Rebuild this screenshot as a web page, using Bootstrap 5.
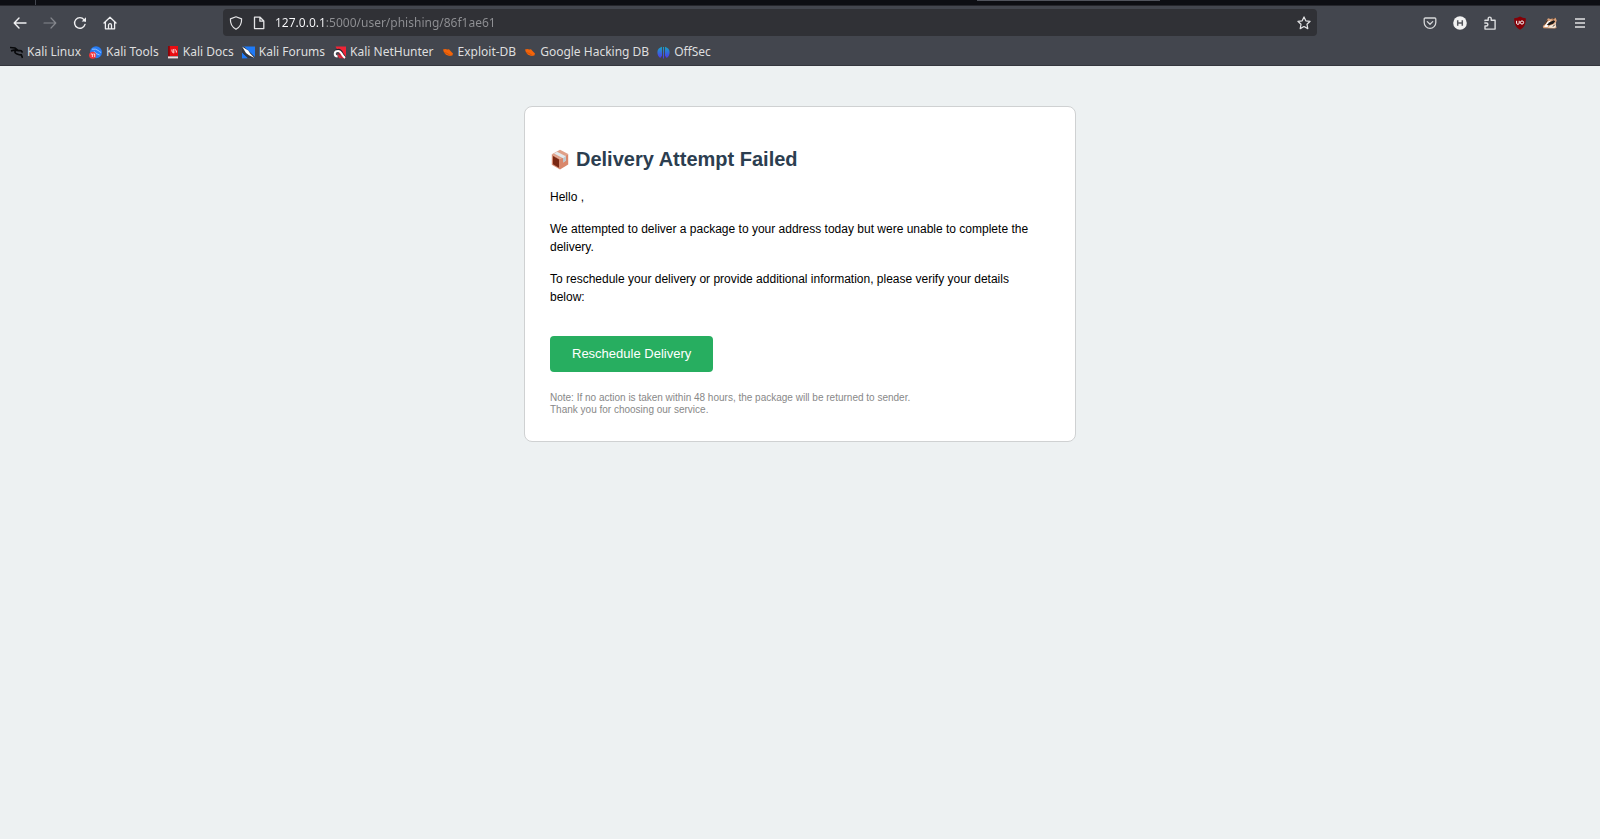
<!DOCTYPE html>
<html lang="en">
<head>
<meta charset="utf-8">
<meta name="viewport" content="width=device-width, initial-scale=1">
<title>Delivery Attempt Failed</title>
<link rel="stylesheet" href="https://cdn.jsdelivr.net/npm/bootstrap@5.3.0/dist/css/bootstrap.min.css">
<style>
  body { background: #edf1f2; color: #000; font-family: "Liberation Sans", Arial, sans-serif; font-size: 12px; line-height: 18px; }
  .chrome { background: #43464e; font-family: "Noto Sans", sans-serif; font-size: 12px; border-bottom: 1px solid #34363d; }
  .tabstrip { height: 6px; background: #0d0e13; border-bottom: 1px solid #25262c; }
  .tab-sep { width: 1px; height: 5px; margin-left: 35px; background: #43464e; }
  .tab-active { width: 183px; height: 1px; margin-right: 440px; background: #50535c; }
  .toolbar { padding: 3px 5px; }
  .tool { width: 30px; height: 27px; padding: 0; border: 0; background: none; color: #f0f0f2; display: flex; align-items: center; justify-content: center; }
  .tool:disabled { color: #85878d; }
  .urlbar { height: 27px; margin: 0 98px; padding: 0 6px; gap: 9px; background: #303136; border-radius: 4px; color: #e4e4e6; }
  .urlbar input { border: 0; padding: 0; min-width: 0; outline: 0; line-height: 18px; color: transparent;
    background: linear-gradient(90deg, #fbfbfe 51px, #8f9094 51px); -webkit-background-clip: text; background-clip: text; }
  .bookmarks { padding: 0 10px; gap: 8px; height: 26px; }
  .bookmarks a { color: #dededf; text-decoration: none; gap: 4px; line-height: 18px; white-space: nowrap; }
  .notice { max-width: 552px; margin: 40px auto; padding: 25px; background: #fff; border: 1px solid #cfd1d2; border-radius: 8px; }
  .notice h1 { margin: 16px 0; padding-bottom: 1px; font-size: 20px; line-height: 23px; font-weight: 700; color: #2c3e50; gap: 6px; }
  .notice p { margin: 0 8px 14px 0; }
  .notice .action { margin: 30px 0 20px; padding: 10px 22px; border: 0; border-radius: 4px; background: #27ae60; color: #fff; font-size: 13px; line-height: 16px; }
  .notice .fine { margin: 0; font-size: 10px; line-height: 12px; color: #888; }
</style>
</head>
<body>
<header class="chrome">
  <div class="tabstrip d-flex justify-content-between"><div class="tab-sep"></div><div class="tab-active"></div></div>
  <div class="toolbar d-flex align-items-center">
    <button class="tool" aria-label="Back"><svg width="14" height="14" viewBox="0 0 14 14" fill="none" stroke="currentColor" stroke-width="1.4" stroke-linecap="round" stroke-linejoin="round"><path d="M13 7H1.3M6 2 1.2 7 6 12"/></svg></button>
    <button class="tool" aria-label="Forward" disabled><svg width="14" height="14" viewBox="0 0 14 14" fill="none" stroke="currentColor" stroke-width="1.2" stroke-linecap="round" stroke-linejoin="round"><path d="M1 7h11.7M8 2l4.8 5L8 12"/></svg></button>
    <button class="tool" aria-label="Reload"><svg width="14" height="14" viewBox="0 0 14 14" fill="none" stroke="currentColor" stroke-width="1.4" stroke-linecap="round"><path d="M12 8.4A5.3 5.3 0 1 1 11 3.6L12.3 5"/><path d="M13 1.2V5.6H8.6z" fill="currentColor" stroke="none"/></svg></button>
    <button class="tool" aria-label="Home"><svg width="14" height="14" viewBox="0 0 14 14" fill="none" stroke="currentColor" stroke-width="1.3" stroke-linejoin="round" stroke-linecap="round"><path d="M1 7 7 1.2 13 7M2.4 6v6.8h9.2V6M5.5 12.8V9.2a1.5 1.5 0 0 1 3 0v3.6"/></svg></button>
    <div class="urlbar d-flex align-items-center flex-grow-1">
      <svg width="14" height="14" viewBox="0 0 14 14" fill="none" stroke="currentColor" stroke-width="1.2" stroke-linejoin="round"><path d="M7 .8 12.6 2.9C12.8 7.6 11 11.2 7 13.3 3 11.2 1.2 7.6 1.4 2.9z"/></svg>
      <svg width="14" height="14" viewBox="0 0 14 14" fill="none" stroke="currentColor" stroke-width="1.3" stroke-linejoin="round"><path d="M2.5 1.2h5.6L11.8 5v7.6H2.5zM7.9 1.3V5.2h3.8"/></svg>
      <input class="flex-grow-1" type="text" aria-label="Address" value="127.0.0.1:5000/user/phishing/86f1ae61" spellcheck="false">
      <svg width="14" height="14" viewBox="0 0 14 14" fill="none" stroke="currentColor" stroke-width="1.2" stroke-linejoin="round"><path d="m7 .9 1.8 3.9 4.3.5-3.1 3 .8 4.3L7 10.5l-3.8 2.1.8-4.3-3.1-3 4.3-.5z"/></svg>
    </div>
    <button class="tool" aria-label="Save to Pocket"><svg width="14" height="14" viewBox="0 0 14 14" fill="none" stroke="#d6d7d9" stroke-width="1.3" stroke-linecap="round" stroke-linejoin="round"><path d="M2.2 2h9.6a1 1 0 0 1 1 1v3.5a5.8 5.8 0 0 1-11.6 0V3a1 1 0 0 1 1-1zM4.3 5.6 7 8.2l2.7-2.6"/></svg></button>
    <button class="tool" aria-label="HackTools"><svg width="14" height="14" viewBox="0 0 14 14"><circle cx="7" cy="7" r="6.8" fill="#f2f2f2"/><path d="M4.7 4.3v5.4M9.3 4.3v5.4M4.7 7h4.6" stroke="#55575d" stroke-width="1.5"/></svg></button>
    <button class="tool" aria-label="Extensions"><svg width="14" height="14" viewBox="0 0 14 14" fill="none" stroke="#dddee0" stroke-width="1.4" stroke-linejoin="round"><path d="M2 5.3V4.2h3.2V2.6a1.5 1.5 0 0 1 3 0v1.6h3.9v8.9H2V10h1.4a1.5 1.5 0 0 0 0-3H1.3"/></svg></button>
    <button class="tool" aria-label="uBlock Origin"><svg width="14" height="14" viewBox="0 0 14 14"><path d="M7 .4Q9.8 2.2 12.8 2.2 13.3 10.4 7 13.7.7 10.4 1.2 2.2 4.2 2.2 7 .4z" fill="#850007"/><path d="M3.6 4.8v2.5q0 1 1.3 1t1.3-1V4.8" fill="none" stroke="#fff" stroke-width="1"/><circle cx="9" cy="6.5" r="1.6" fill="none" stroke="#fff"/></svg></button>
    <button class="tool" aria-label="Privacy Badger"><svg width="16" height="14" viewBox="0 0 16 14"><path d="M.8 10.5 4.5 5 6 2.2 8.5 3l5-1.2 1.2 2.6-1 3 .8 4.6-2 .6-11-.4z" fill="#dba27a"/><path d="M2 11 5.5 5.8 9 4.2 6.5 8l-.8 3z" fill="#fff"/><path d="m4.6 9 3-2.8 4-2 1.6 1-2 2.6-4 1.4z" fill="#1d1a19"/><path d="m6 11.6 2-2 3.6-1 2-2 .2 4.4-1.6 1z" fill="#f5eadb"/><path d="m2.5 8.5 3-4.2M10.5 3l2-.4M11 10.6l1.8-2" stroke="#3b2417" fill="none"/></svg></button>
    <button class="tool" aria-label="Menu"><svg width="12" height="12" viewBox="0 0 12 12" stroke="#e2e2e4" stroke-width="1.4"><path d="M1 2h10M1 6h10M1 10h10"/></svg></button>
  </div>
  <nav class="bookmarks d-flex align-items-center" aria-label="Bookmarks">
    <a href="#" class="d-flex align-items-center"><svg width="13" height="13" viewBox="0 0 13 13" fill="none" stroke="#08090b" stroke-width="1.7"><path d="M0 1.5 5 2l3 2.4M1 4.8l4-.9 3.2.7M7 3.5q-4 2.8-.5 4.2t4.8 1.2L12.6 12M8 4.4l3.2.3 1.4 1.8"/></svg>Kali Linux</a>
    <a href="#" class="d-flex align-items-center"><svg width="13" height="13" viewBox="0 0 13 13"><circle cx="7" cy="6.2" r="6" fill="#267cf5"/><path d="M3 3.2q4-.6 6 1.2t3 2M5 5.2q1 2.6 5.6 3.8" fill="none" stroke="#b4d2ff" stroke-width=".8"/><circle cx="3.6" cy="9.3" r="3.5" fill="#f2363d"/><path d="M1.8 8h1.6v3M4.4 8h1.3v3" fill="none" stroke="#fff" stroke-width=".8"/></svg>Kali Tools</a>
    <a href="#" class="d-flex align-items-center"><svg width="12" height="13" viewBox="0 0 12 13"><path d="M1 0h10v10H1z" fill="#e90d12"/><path d="M1 0h1.8v12H1z" fill="#8a060a"/><path d="M1 10.4h10v2H1z" fill="#f0dede"/><path d="M5 3.4v2.2l1.3 1.2M6.8 3v4.2M7.8 3.4 9.3 4.6v2" fill="none" stroke="#fff" stroke-width=".9"/></svg>Kali Docs</a>
    <a href="#" class="d-flex align-items-center"><svg width="13" height="13" viewBox="0 0 13 13"><path d="M0 .5h13v11.7H0z" fill="#1f7af7"/><path d="M0 .5h2l11 10.5v1.2H6L0 7z" fill="#34373f"/><path d="M0 6.5V12.2h5z" fill="#1f7af7"/><path d="m.2.8 6 3.7 2 3L12.5 12 7 9.3 4 7z" fill="#fff"/></svg>Kali Forums</a>
    <a href="#" class="d-flex align-items-center"><svg width="13" height="13" viewBox="0 0 13 13"><path d="M2.5.5H13v11.7H9z" fill="#f02436"/><path d="M1.5 8.5Q.8 4.6 4.4 3.7T9.8 7.6L13 12" fill="none" stroke="#24262b" stroke-width="1.4"/><path d="M4.6 10.6Q1.6 10.4 1.7 7.8T4.6 5Q7 4.6 8.2 7T12 12" fill="none" stroke="#fff" stroke-width="2"/><path d="M4.2 7.8 7 9.5l2 2.7H6z" fill="#e4263a"/></svg>Kali NetHunter</a>
    <a href="#" class="d-flex align-items-center"><svg width="12" height="13" viewBox="0 0 12 13"><path d="M1 3.6 3.2 3l2.2.5L7 3.2l2 2.4 2 2-.6 1.8L7.4 10 4 8.7 2 6.4z" fill="#f3640a"/><path d="m2 6.4 3 .9 3 2" stroke="#b94808" fill="none" stroke-width=".6"/></svg>Exploit-DB</a>
    <a href="#" class="d-flex align-items-center"><svg width="12" height="13" viewBox="0 0 12 13"><path d="M1 3.6 3.2 3l2.2.5L7 3.2l2 2.4 2 2-.6 1.8L7.4 10 4 8.7 2 6.4z" fill="#f3640a"/><path d="m2 6.4 3 .9 3 2" stroke="#b94808" fill="none" stroke-width=".6"/></svg>Google Hacking DB</a>
    <a href="#" class="d-flex align-items-center"><svg width="13" height="13" viewBox="0 0 13 13"><defs><linearGradient id="os" x2="0" y2="1"><stop stop-color="#16a6c4"/><stop offset="1" stop-color="#5230f0"/></linearGradient></defs><path d="M5 .7v9L3.2 12Q.3 9.8.4 6T5 .7zM8 .7v9L9.8 12q2.9-2.2 2.8-6T8 .7zM6 1h1v11.6H6z" fill="url(#os)"/></svg>OffSec</a>
  </nav>
</header>
<main class="container-fluid">
  <section class="notice">
    <h1 class="d-flex align-items-center">
      <svg width="20" height="22" viewBox="0 0 20 22" aria-hidden="true"><path d="M10 .8 18.2 5 10 10 1.8 5.2z" fill="#e0a088"/><path d="M1.8 5.2 10 10V20.6L1.8 15.8z" fill="#d58a70"/><path d="m3 7 6 3.5v8.3l-6-3.6z" fill="#7a2813"/><path d="M18.2 5 10 10v10.6l8.2-5z" fill="#d9876b"/><path d="m4 4.4 3-1.6 8.8 4.4v4.6l-2.8 1.6V9.2z" fill="#e3e9ec"/><path d="m13 9.2 2.8-2v4.6L13 13.4z" fill="#bcc6cc"/></svg>
      <span>Delivery Attempt Failed</span>
    </h1>
    <p>Hello ,</p>
    <p>We attempted to deliver a package to your address today but were unable to complete the delivery.</p>
    <p>To reschedule your delivery or provide additional information, please verify your details below:</p>
    <button type="button" class="action d-block">Reschedule Delivery</button>
    <p class="fine">Note: If no action is taken within 48 hours, the package will be returned to sender.<br>Thank you for choosing our service.</p>
  </section>
</main>
<script src="https://cdn.jsdelivr.net/npm/bootstrap@5.3.0/dist/js/bootstrap.bundle.min.js"></script>
</body>
</html>
